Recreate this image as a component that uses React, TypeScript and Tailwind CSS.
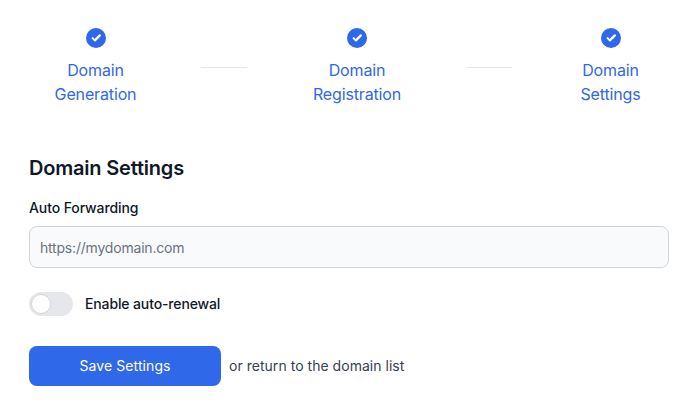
import { useState } from "react";

const STEPS = [
  { lines: ["Domain", "Generation"], width: "w-[81px]" },
  { lines: ["Domain", "Registration"], width: "w-[90px] ml-[65px]" },
  { lines: ["Domain", "Settings"], width: "w-[61px] ml-[68px]" },
];

function CheckCircle() {
  return (
    <svg className="h-5 w-5 text-[#2f68e8]" viewBox="0 0 20 20" fill="currentColor">
      <path d="M10 0a10 10 0 1 0 0 20 10 10 0 0 0 0-20Zm4.7 8.2-5 5a1 1 0 0 1-1.4 0l-2.5-2.5a1 1 0 0 1 1.4-1.4L8.5 11l4.3-4.2a1 1 0 0 1 1.9 1.4Z" />
    </svg>
  );
}

function Step({ lines, width }: { lines: string[]; width: string }) {
  return (
    <div className={`flex shrink-0 flex-col items-center text-center ${width}`}>
      <CheckCircle />
      <div className="mt-[10px] text-base leading-6 tracking-[-0.14px] whitespace-nowrap text-[#2f68e8]">
        {lines.map((line) => (
          <div key={line}>{line}</div>
        ))}
      </div>
    </div>
  );
}

export default function App() {
  const [renew, setRenew] = useState(false);

  return (
    <div className="h-[415px] w-[699px] overflow-hidden bg-white pl-[29px] pr-[30px] pt-[28px] font-['Inter',sans-serif]">
      <div className="flex items-start pl-[26px]">
        <Step {...STEPS[0]} />
        <div className="mt-[39px] ml-[65px] h-px w-[46px] bg-[#e5e7eb]" />
        <Step {...STEPS[1]} />
        <div className="mt-[39px] ml-[64px] h-px w-[46px] bg-[#e5e7eb]" />
        <Step {...STEPS[2]} />
      </div>

      <h2 className="mt-[48px] text-xl leading-7 font-semibold tracking-[-0.2px] text-[#111827]">Domain Settings</h2>

      <label className="mt-[16px] block text-sm leading-5 font-medium tracking-[-0.1px] text-[#111827]">Auto Forwarding</label>
      <input
        className="mt-2 block h-[42px] w-full rounded-lg border border-[#d1d5db] bg-[#f9fafb] px-[10px] text-sm tracking-[-0.2px] text-[#111827] placeholder:text-[#6b7280] focus:outline-none"
        placeholder="https://mydomain.com"
      />

      <div className="mt-6 flex items-center gap-3">
        <button
          type="button"
          onClick={() => setRenew(!renew)}
          className="flex h-6 w-11 items-center rounded-full bg-[#e5e7eb] px-[2px]"
        >
          <span className="h-5 w-5 rounded-full border border-[#d1d5db] bg-white" />
        </button>
        <span className="text-sm font-medium tracking-[-0.13px] text-[#111827]">Enable auto-renewal</span>
      </div>

      <div className="mt-[30px] flex items-center gap-2">
        <button type="button" className="h-10 w-48 rounded-lg bg-[#2f68e8] text-sm font-normal tracking-[0.1px] text-white">
          Save Settings
        </button>
        <span className="text-sm tracking-[0.03px] text-[#374151]">or return to the domain list</span>
      </div>
    </div>
  );
}
